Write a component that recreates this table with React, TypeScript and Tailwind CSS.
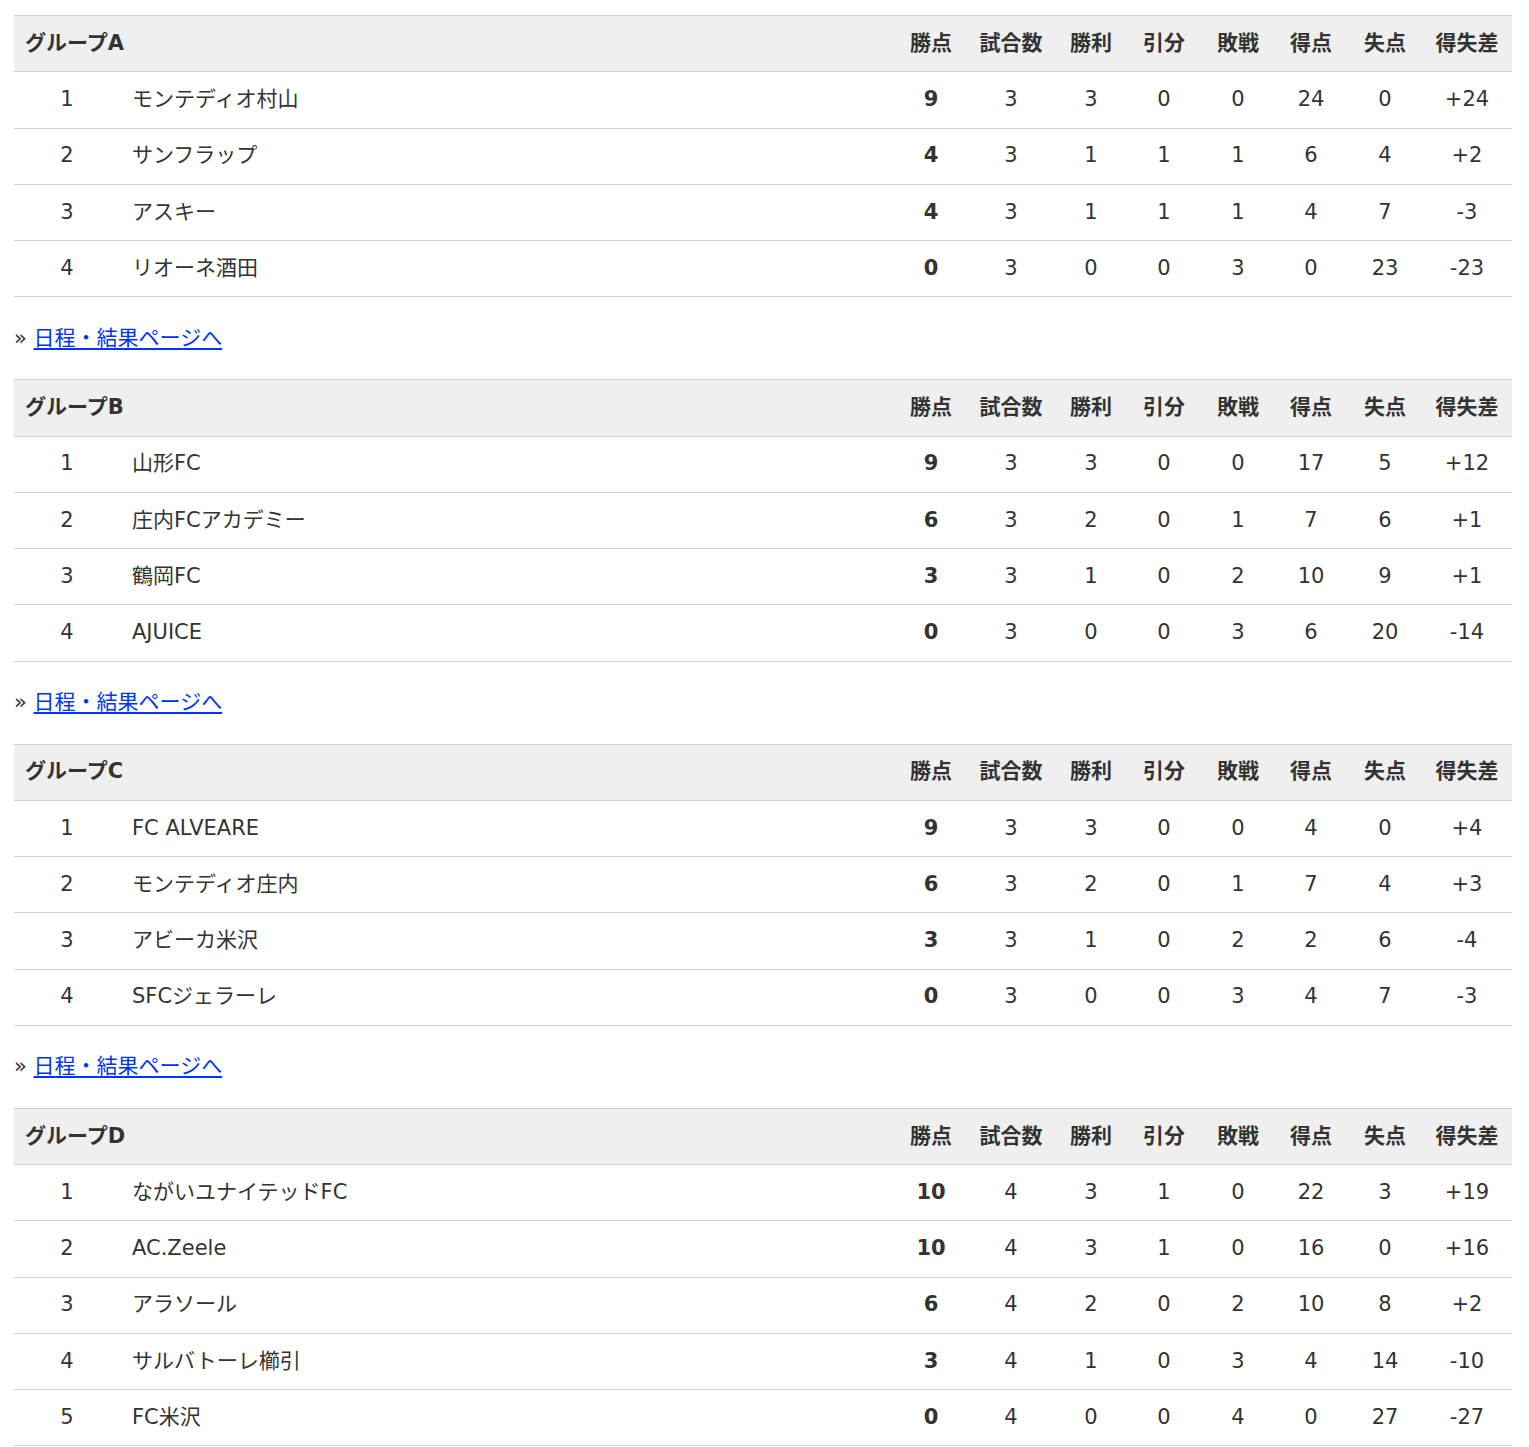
const font = { fontFamily: '"DejaVu Sans", "Noto Sans CJK JP", sans-serif' }

type Row = [string, number, number, number, number, number, number, number, string]

interface Group {
  name: string
  rows: Row[]
}

const groups: Group[] = [
  {
    name: 'グループA',
    rows: [
      ['モンテディオ村山', 9, 3, 3, 0, 0, 24, 0, '+24'],
      ['サンフラップ', 4, 3, 1, 1, 1, 6, 4, '+2'],
      ['アスキー', 4, 3, 1, 1, 1, 4, 7, '-3'],
      ['リオーネ酒田', 0, 3, 0, 0, 3, 0, 23, '-23'],
    ],
  },
  {
    name: 'グループB',
    rows: [
      ['山形FC', 9, 3, 3, 0, 0, 17, 5, '+12'],
      ['庄内FCアカデミー', 6, 3, 2, 0, 1, 7, 6, '+1'],
      ['鶴岡FC', 3, 3, 1, 0, 2, 10, 9, '+1'],
      ['AJUICE', 0, 3, 0, 0, 3, 6, 20, '-14'],
    ],
  },
  {
    name: 'グループC',
    rows: [
      ['FC ALVEARE', 9, 3, 3, 0, 0, 4, 0, '+4'],
      ['モンテディオ庄内', 6, 3, 2, 0, 1, 7, 4, '+3'],
      ['アビーカ米沢', 3, 3, 1, 0, 2, 2, 6, '-4'],
      ['SFCジェラーレ', 0, 3, 0, 0, 3, 4, 7, '-3'],
    ],
  },
  {
    name: 'グループD',
    rows: [
      ['ながいユナイテッドFC', 10, 4, 3, 1, 0, 22, 3, '+19'],
      ['AC.Zeele', 10, 4, 3, 1, 0, 16, 0, '+16'],
      ['アラソール', 6, 4, 2, 0, 2, 10, 8, '+2'],
      ['サルバトーレ櫛引', 3, 4, 1, 0, 3, 4, 14, '-10'],
      ['FC米沢', 0, 4, 0, 0, 4, 0, 27, '-27'],
    ],
  },
]

const heads = ['勝点', '試合数', '勝利', '引分', '敗戦', '得点', '失点', '得失差']

const cols =
  'grid grid-cols-[106px_1fr_70px_90px_70px_76px_72px_74px_74px_90px] h-[56.25px] items-center border-b border-[#d0d0d0]'

function Standings({ group, last }: { group: Group; last: boolean }) {
  return (
    <div>
      <div className="border-t border-[#d0d0d0]">
        <div className={`${cols} bg-[#efefef] font-bold`}>
          <div className="col-span-2 pl-[11px]">{group.name}</div>
          {heads.map((h) => (
            <div key={h} className="text-center">
              {h}
            </div>
          ))}
        </div>
        {group.rows.map((r, i) => (
          <div key={r[0]} className={cols}>
            <div className="text-center">{i + 1}</div>
            <div className="pl-3">{r[0]}</div>
            {r.slice(1).map((v, j) => (
              <div key={j} className={`text-center ${j === 0 ? 'font-bold' : ''}`}>
                {v}
              </div>
            ))}
          </div>
        ))}
      </div>
      {!last && (
        <p className="mt-[25.5px] mb-[26.5px] h-[30px] leading-[30px]">
          »{' '}
          <a href="#" className="text-[#0033ff] underline underline-offset-[3px]">
            日程・結果ページへ
          </a>
        </p>
      )}
    </div>
  )
}

export default function App() {
  return (
    <div className="bg-white pt-[15px] pl-[14px] pr-[17px] text-[21px] text-[#333]" style={font}>
      {groups.map((g, i) => (
        <Standings key={g.name} group={g} last={i === groups.length - 1} />
      ))}
    </div>
  )
}
